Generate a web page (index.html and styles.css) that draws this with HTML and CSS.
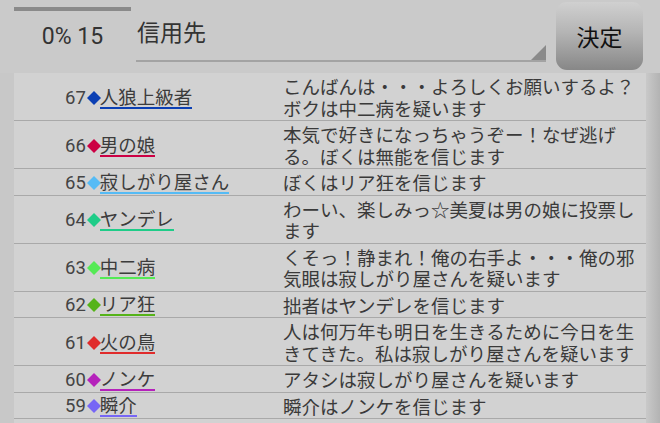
FILE: index.html
```html
<!DOCTYPE html>
<html lang="ja">
<head>
<meta charset="utf-8">
<title>投票</title>
<link rel="stylesheet" href="styles.css">
</head>
<body>
<div class="screen">
  <header class="top">
    <div class="status">
      <div class="progress"></div>
      <div class="count">0% 15</div>
    </div>
    <div class="spinner">
      <span class="spinner-label">信用先</span>
      <span class="spinner-arrow"></span>
    </div>
    <button class="decide">決定</button>
  </header>
  <div class="body">
    <div class="edge-left"></div>
    <ul class="log">
      <li class="row">
        <div class="who"><span class="num">67</span><svg class="dia" viewBox="0 0 14 14"><polygon points="7,0 14,7 7,14 0,7" fill="#0b3fb3"/></svg><span class="name c67">人狼上級者</span></div>
        <div class="msg">こんばんは・・・よろしくお願いするよ？ボクは中二病を疑います</div>
      </li>
      <li class="row">
        <div class="who"><span class="num">66</span><svg class="dia" viewBox="0 0 14 14"><polygon points="7,0 14,7 7,14 0,7" fill="#cc0044"/></svg><span class="name c66">男の娘</span></div>
        <div class="msg">本気で好きになっちゃうぞー！なぜ逃げる。ぼくは無能を信じます</div>
      </li>
      <li class="row">
        <div class="who"><span class="num">65</span><svg class="dia" viewBox="0 0 14 14"><polygon points="7,0 14,7 7,14 0,7" fill="#55bbf5"/></svg><span class="name c65">寂しがり屋さん</span></div>
        <div class="msg">ぼくはリア狂を信じます</div>
      </li>
      <li class="row">
        <div class="who"><span class="num">64</span><svg class="dia" viewBox="0 0 14 14"><polygon points="7,0 14,7 7,14 0,7" fill="#1fcc88"/></svg><span class="name c64">ヤンデレ</span></div>
        <div class="msg">わーい、楽しみっ☆美夏は男の娘に投票します</div>
      </li>
      <li class="row">
        <div class="who"><span class="num">63</span><svg class="dia" viewBox="0 0 14 14"><polygon points="7,0 14,7 7,14 0,7" fill="#55ea55"/></svg><span class="name c63">中二病</span></div>
        <div class="msg">くそっ！静まれ！俺の右手よ・・・俺の邪気眼は寂しがり屋さんを疑います</div>
      </li>
      <li class="row">
        <div class="who"><span class="num">62</span><svg class="dia" viewBox="0 0 14 14"><polygon points="7,0 14,7 7,14 0,7" fill="#55b318"/></svg><span class="name c62">リア狂</span></div>
        <div class="msg">拙者はヤンデレを信じます</div>
      </li>
      <li class="row">
        <div class="who"><span class="num">61</span><svg class="dia" viewBox="0 0 14 14"><polygon points="7,0 14,7 7,14 0,7" fill="#e02b2b"/></svg><span class="name c61">火の鳥</span></div>
        <div class="msg">人は何万年も明日を生きるために今日を生きてきた。私は寂しがり屋さんを疑います</div>
      </li>
      <li class="row">
        <div class="who"><span class="num">60</span><svg class="dia" viewBox="0 0 14 14"><polygon points="7,0 14,7 7,14 0,7" fill="#b522bb"/></svg><span class="name c60">ノンケ</span></div>
        <div class="msg">アタシは寂しがり屋さんを疑います</div>
      </li>
      <li class="row">
        <div class="who"><span class="num">59</span><svg class="dia" viewBox="0 0 14 14"><polygon points="7,0 14,7 7,14 0,7" fill="#7766f5"/></svg><span class="name c59">瞬介</span></div>
        <div class="msg">瞬介はノンケを信じます</div>
      </li>
    </ul>
    <div class="edge-right"></div>
  </div>
</div>
</body>
</html>
```

FILE: styles.css
```css
html, body {
  margin: 0;
  padding: 0;
}
body {
  background: #cacaca;
  font-family: Roboto, "Noto Sans CJK JP", sans-serif;
  color: #3c3c3c;
}
.screen {
  width: 660px;
  height: 423px;
  overflow: hidden;
  display: flex;
  flex-direction: column;
}
.top {
  display: flex;
  height: 73px;
  flex: none;
}
.status {
  width: 117px;
  margin-left: 14px;
}
.progress {
  height: 4px;
  margin-top: 7px;
  background: #8a8a8a;
}
.count {
  margin-top: 12px;
  font-size: 23px;
  line-height: 27px;
  text-align: center;
  color: #333;
}
.spinner {
  position: relative;
  width: 409px;
  height: 44px;
  margin-left: 5px;
  padding: 16px 0 0 1px;
  border-bottom: 2px solid #a3a3a3;
}
.spinner-label {
  font-family: "Noto Sans CJK JP", sans-serif;
  font-size: 23px;
  line-height: 30px;
  color: #333;
}
.spinner-arrow {
  position: absolute;
  right: 0;
  bottom: 0;
  width: 0;
  height: 0;
  border-left: 15px solid transparent;
  border-bottom: 15px solid #8a8a8a;
}
.decide {
  margin: 2px 0 0 10px;
  width: 87px;
  height: 68px;
  border: none;
  border-radius: 11px;
  background: linear-gradient(#d0d0d0, #b4b4b4 45%, #878787);
  font-family: "Noto Sans CJK JP", sans-serif;
  font-size: 23px;
  color: #111;
  padding: 0;
}
.body {
  flex: 1;
  display: flex;
}
.edge-left {
  width: 14px;
  background: #c8c8c8;
}
.edge-right {
  flex: 1;
  background: linear-gradient(to right, #c9c9c9, #b3b3b3);
}
.log {
  width: 632px;
  margin: 0;
  padding: 0;
  list-style: none;
  background: #d2d2d2;
}
.row {
  display: grid;
  grid-template-columns: 269px 363px;
  border-bottom: 1px solid #a9a9a9;
}
.who {
  display: flex;
  align-items: center;
  padding: 2px 0 0 51px;
}
.num {
  font-size: 18.5px;
  line-height: 18px;
  color: #444;
}
.dia {
  width: 14px;
  height: 14px;
  margin: 0 -1px 0 1px;
}
.name {
  font-family: "Noto Sans CJK JP", sans-serif;
  font-size: 18.5px;
  line-height: 18px;
  padding-bottom: 2px;
  border-bottom: 2px solid;
  color: #3c3c3c;
}
.c67 { border-color: #0b3fb3; }
.c66 { border-color: #cc0044; }
.c65 { border-color: #55bbf5; }
.c64 { border-color: #1fcc88; }
.c63 { border-color: #55ea55; }
.c62 { border-color: #55b318; }
.c61 { border-color: #e02b2b; }
.c60 { border-color: #b522bb; }
.c59 { border-color: #7766f5; }
.msg {
  font-family: "Noto Sans CJK JP", sans-serif;
  font-size: 18.5px;
  line-height: 21.5px;
  padding: 3px 0 1px;
  color: #3a3a3a;
}
```
